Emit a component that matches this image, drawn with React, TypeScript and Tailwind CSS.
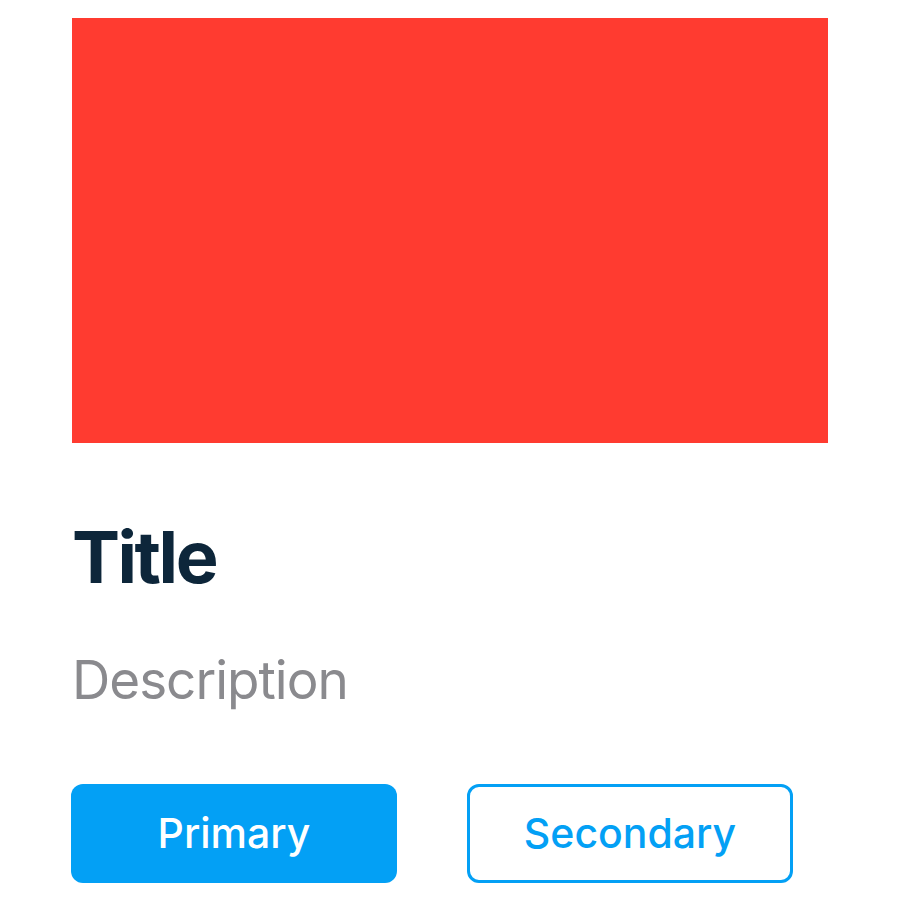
export default function App() {
  return (
    <div className="w-[900px] h-[900px] bg-white flex flex-col pt-[18px] pl-[72px]" style={{ fontFamily: 'Inter, "Noto Sans", sans-serif' }}>
      <div className="w-[756px] h-[425px] bg-[#ff3b30]" />
      <h1 className="mt-[78px] text-[72px] leading-none font-bold text-[#0d263a] tracking-[-2.5px]">Title</h1>
      <p className="mt-[61px] text-[53px] leading-none text-[#8a8a8e] tracking-[-1px]">Description</p>
      <div className="mt-[77px] -ml-[1px] flex gap-[70px]">
        <button className="w-[326px] h-[99px] rounded-[12px] bg-[#03a0f5] text-white text-[41px] font-medium leading-none flex items-center justify-center">Primary</button>
        <button className="w-[326px] h-[99px] rounded-[12px] border-[3px] border-[#03a0f5] bg-white text-[#03a0f5] text-[41px] font-medium leading-none flex items-center justify-center">Secondary</button>
      </div>
    </div>
  );
}
